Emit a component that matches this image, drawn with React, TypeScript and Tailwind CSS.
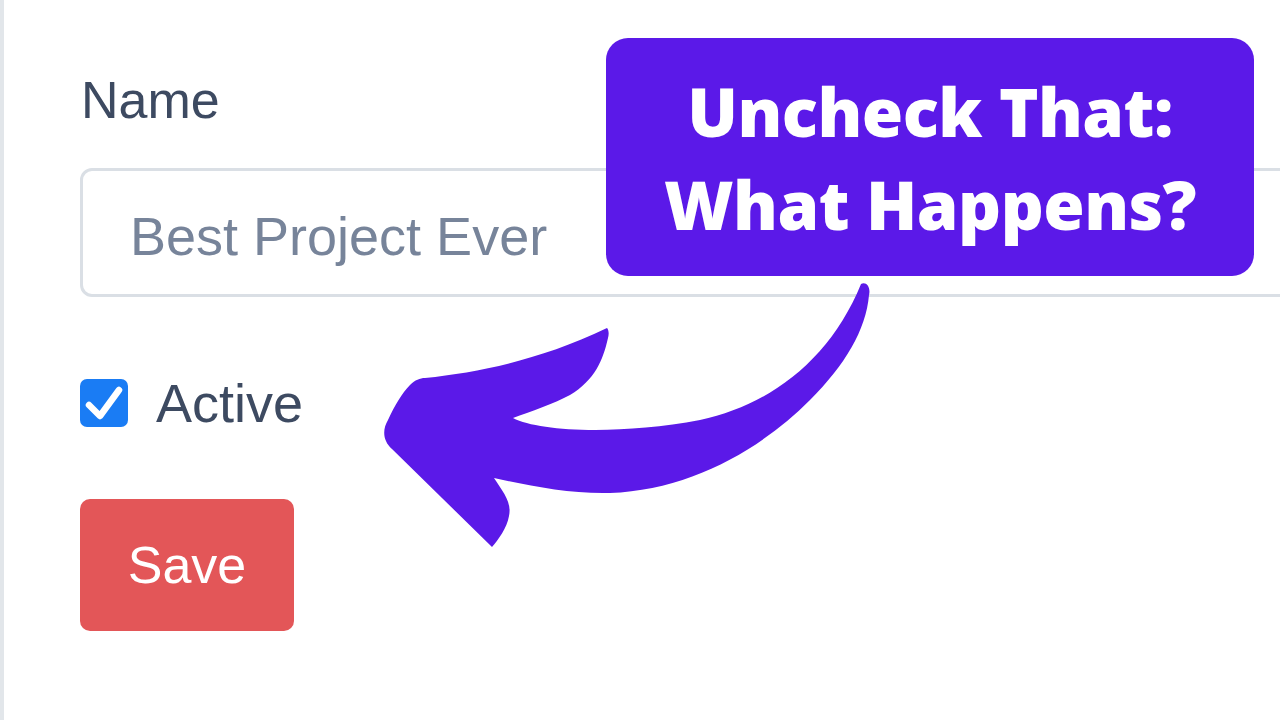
import React from 'react';

// ─── Callout arrow (drawing over the form) ───────────────────────────────────

function CurvedArrow() {
  return (
    <svg
      className="pointer-events-none absolute left-[-4px] top-0"
      width="1280"
      height="720"
      viewBox="0 0 1280 720"
      aria-hidden="true"
    >
      <path
        fill="#5b19e8"
        d="M 861 284
           C 866 281, 871 287, 869 295
           C 866 330, 845 365, 810 400
           C 760 450, 690 490, 610 493
           C 570 494, 530 486, 494 478
           C 503 492, 512 502, 509 516
           C 507 528, 498 540, 492 547
           L 392 449
           C 383 441, 382 430, 388 420
           C 395 405, 402 393, 410 385
           C 415 380, 420 378, 425 378
           C 480 372, 540 360, 607 328
           C 609 330, 609 335, 608 338
           C 603 360, 595 380, 570 395
           C 555 403, 530 412, 513 418
           C 540 432, 620 435, 700 420
           C 770 405, 830 360, 861 284 Z"
      />
    </svg>
  );
}

function CheckedBox() {
  return (
    <span className="flex h-[48px] w-[48px] shrink-0 items-center justify-center rounded-[7px] bg-[#1a7cf4]">
      <svg width="48" height="48" viewBox="0 0 48 48" aria-hidden="true">
        <path
          d="M 9 26 L 20 37 L 39 11"
          fill="none"
          stroke="#ffffff"
          strokeWidth="6.5"
          strokeLinecap="round"
          strokeLinejoin="round"
        />
      </svg>
    </span>
  );
}

// ─── Page ─────────────────────────────────────────────────────────────────────

export default function App() {
  return (
    <main
      className="relative h-[720px] w-[1280px] overflow-hidden border-l-4 border-[#e2e6ea] bg-white"
      style={{ fontFamily: '"Liberation Sans", Arial, sans-serif' }}
    >
      <div className="flex flex-col pl-[76px] pt-[74px]">
        <label className="pl-[1px] text-[52px] leading-[52px] text-[#3d4a61]">Name</label>

        <input
          type="text"
          placeholder="Best Project Ever"
          className="mt-[42px] h-[129px] w-[1300px] shrink-0 rounded-[12px] border-[3px] border-[#dadfe5] bg-white px-[47px] pt-[6px] text-[54px] text-[#3d4a61] outline-none placeholder:text-[#77849a]"
        />

        <div className="mt-[80px] flex items-center gap-[28px]">
          <CheckedBox />
          <span className="text-[54px] leading-[52px] text-[#3d4a61]">Active</span>
        </div>

        <div className="mt-[70px]">
          <button className="h-[132px] w-[214px] rounded-[10px] bg-[#e35658] text-[52px] leading-[52px] text-white">
            Save
          </button>
        </div>
      </div>

      {/* Callout */}
      <div
        className="absolute left-[602px] top-[38px] flex h-[238px] w-[648px] flex-col items-center justify-center rounded-[22px] bg-[#5b19e8] pt-[2px] text-center text-[67px] font-extrabold leading-[93px] tracking-[-0.5px] text-white"
        style={{ fontFamily: '"Open Sans", "Noto Sans", sans-serif' }}
      >
        <span>Uncheck That:</span>
        <span>What Happens?</span>
      </div>

      <CurvedArrow />
    </main>
  );
}
